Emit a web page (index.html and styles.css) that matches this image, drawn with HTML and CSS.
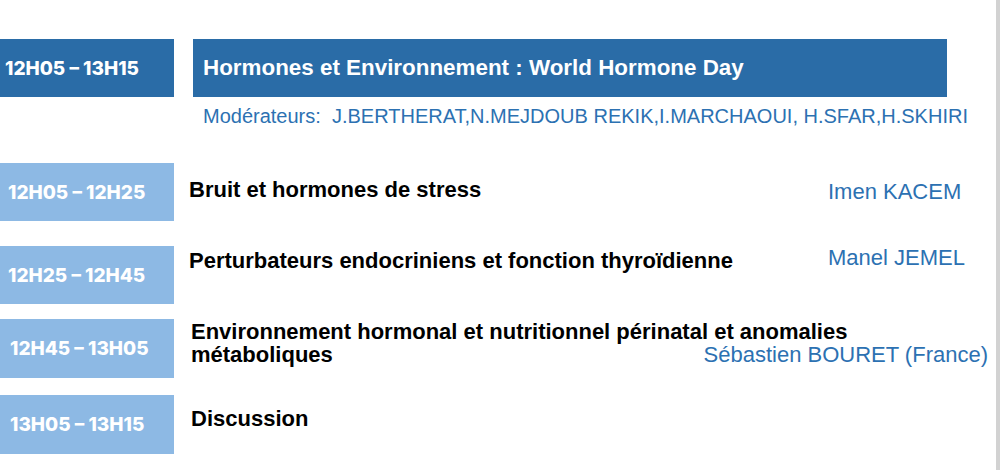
FILE: index.html
```html
<!DOCTYPE html>
<html lang="fr">
<head>
<meta charset="utf-8">
<title>Hormones et Environnement</title>
<link rel="stylesheet" href="styles.css">
</head>
<body>
<div class="page">
  <div class="session-head">
    <div class="time time-dark">12H05 – 13H15</div>
    <div class="session-title">Hormones et Environnement : World Hormone Day</div>
  </div>
  <p class="moderators">Modérateurs:&nbsp; J.BERTHERAT,N.MEJDOUB REKIK,I.MARCHAOUI, H.SFAR,H.SKHIRI</p>

  <div class="talk talk-1">
    <div class="time time-light">12H05 – 12H25</div>
    <div class="talk-title pad-1">Bruit et hormones de stress</div>
    <div class="speaker spk-1">Imen KACEM</div>
  </div>

  <div class="talk talk-2">
    <div class="time time-light">12H25 – 12H45</div>
    <div class="talk-title pad-2">Perturbateurs endocriniens et fonction thyroïdienne</div>
    <div class="speaker spk-2">Manel JEMEL</div>
  </div>

  <div class="talk talk-3">
    <div class="time time-light">12H45 – 13H05</div>
    <div class="talk-block">
      <div class="talk-title tight">Environnement hormonal et nutritionnel périnatal et anomalies</div>
      <div class="line-two">
        <span class="talk-title tight">métaboliques</span>
        <span class="speaker">Sébastien BOURET (France)</span>
      </div>
    </div>
  </div>

  <div class="talk talk-4">
    <div class="time time-light">13H05 – 13H15</div>
    <div class="talk-title pad-4 shift">Discussion</div>
  </div>
</div>
</body>
</html>
```

FILE: styles.css
```css
html, body {
  margin: 0;
  padding: 0;
  background: #ffffff;
}

.page {
  width: 996px;
  height: 470px;
  border-right: 4px solid #d2d2d2;
  overflow: hidden;
  font-family: "Liberation Sans", Arial, sans-serif;
}

.session-head {
  display: flex;
  margin-top: 39px;
  height: 58px;
}

.time {
  flex: 0 0 174px;
  width: 174px;
  height: 58px;
  display: flex;
  align-items: center;
  box-sizing: border-box;
  font-family: Inter, "Open Sans", sans-serif;
  font-weight: 800;
  font-size: 19px;
  letter-spacing: 0;
  color: #ffffff;
  white-space: nowrap;
}

.time-dark {
  background: #2a6ca7;
  padding-left: 5px;
}

.time-light {
  background: #8db9e4;
  padding-left: 8px;
}

.session-title {
  margin-left: 19px;
  width: 754px;
  background: #2a6ca7;
  color: #ffffff;
  font-weight: 700;
  font-size: 22.4px;
  display: flex;
  align-items: center;
  padding-left: 10px;
  box-sizing: border-box;
}

.moderators {
  margin: 7px 0 0 203px;
  font-size: 20px;
  line-height: 24px;
  color: #2c71b2;
  white-space: nowrap;
}

.talk {
  display: flex;
  align-items: flex-start;
}

.talk-1 { margin-top: 35px; }
.talk-2 { margin-top: 25px; }
.talk-3 { margin-top: 15px; }
.talk-4 { margin-top: 17px; }
.talk-3 .time { height: 59px; padding-left: 10px; }
.talk-4 .time { height: 59px; padding-left: 10px; }

.talk-title {
  font-weight: 700;
  font-size: 22px;
  line-height: 26px;
  color: #000000;
  margin-left: 15px;
}

.pad-1 { padding-top: 14px; width: 639px; }
.pad-2 { padding-top: 2px; width: 639px; }
.pad-4 { padding-top: 11px; }
.shift { margin-left: 17px; }

.speaker {
  font-size: 22px;
  line-height: 26px;
  color: #2c71b2;
  white-space: nowrap;
}

.spk-1 { padding-top: 16px; }
.spk-2 { margin-top: -1px; }

.talk-block {
  flex: 1;
  padding-top: 1px;
  padding-left: 17px;
  padding-right: 8px;
}

.talk-block .talk-title {
  margin-left: 0;
}

.tight {
  line-height: 23px;
}

.line-two {
  display: flex;
  justify-content: space-between;
  align-items: flex-start;
}

.line-two .speaker {
  margin-top: -1px;
}
```
